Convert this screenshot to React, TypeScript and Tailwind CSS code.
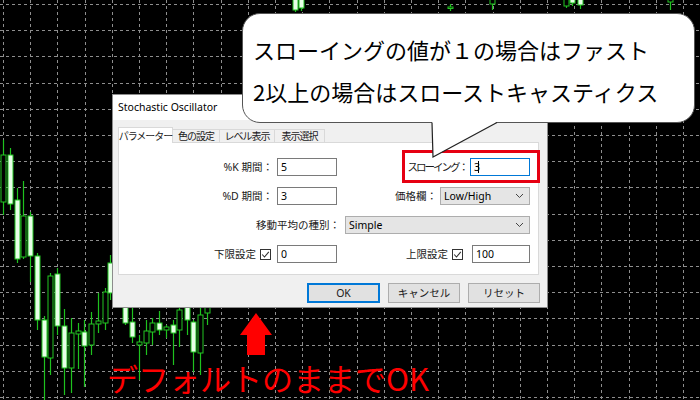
import React from "react";

type C = [number, number, number, number, number, boolean];

const candles: C[] = [
  [3, 140, 155, 202, 215, false],
  [10, 148, 155, 204, 210, true],
  [17, 188, 200, 259, 263, true],
  [23, 181, 216, 257, 259, false],
  [30, 212, 216, 256, 282, true],
  [37, 253, 256, 320, 330, true],
  [44, 316, 320, 357, 400, true],
  [50, 273, 276, 358, 375, false],
  [57, 268, 274, 326, 335, true],
  [64, 309, 326, 368, 395, true],
  [71, 318, 333, 368, 393, false],
  [78, 323, 331, 334, 369, false],
  [84, 320, 332, 346, 387, true],
  [91, 312, 324, 345, 355, false],
  [98, 293, 321, 324, 333, false],
  [105, 288, 292, 323, 330, false],
  [110, 255, 263, 293, 300, true],
  [125, 290, 295, 323, 325, true],
  [132, 300, 322, 337, 343, true],
  [139, 335, 342, 345, 380, false],
  [146, 320, 331, 343, 355, false],
  [152, 318, 323, 332, 345, false],
  [159, 311, 323, 330, 335, true],
  [166, 325, 327, 330, 338, false],
  [173, 320, 325, 333, 365, true],
  [179, 300, 310, 330, 347, false],
  [187, 290, 300, 320, 335, true],
  [193, 320, 322, 352, 372, true],
  [200, 300, 315, 353, 375, false],
  [207, 290, 300, 313, 325, false],
  [295, -5, -2, 10, 12, true],
  [301, -5, -2, 8, 11, true],
  [450, 4, 7, 8, 11, false],
  [492, -5, -2, 4, 10, false],
  [566, -5, -2, 6, 8, false],
  [572, -5, -2, 3, 6, true],
  [580, -5, -2, 5, 9, true],
  [670, -5, -2, 2, 10, false],
];

const VX = Array.from({ length: 26 }, (_, i) => 3.5 + Math.round(i * 27.2));
const HY = Array.from({ length: 16 }, (_, i) => 4.5 + Math.round(i * 26.2));

function Chart() {
  return (
    <svg className="absolute inset-0" width={700} height={400} viewBox="0 0 700 400">
      <rect width={700} height={400} fill="#000" />
      {VX.map((x) => (
        <line key={"v" + x} x1={x} y1={0} x2={x} y2={400} stroke="#8e8e8e" strokeWidth={1} strokeDasharray="3 3" />
      ))}
      {HY.map((y) => (
        <line key={"h" + y} x1={0} y1={y} x2={700} y2={y} stroke="#8e8e8e" strokeWidth={1} strokeDasharray="3 3" />
      ))}
      {candles.map(([x, hi, top, bot, lo, filled], i) => (
        <g key={i}>
          <line x1={x + 0.5} y1={hi} x2={x + 0.5} y2={lo} stroke="#1ec21e" strokeWidth={1.2} />
          <rect
            x={x - 2}
            y={top}
            width={5}
            height={Math.max(bot - top, 1.5)}
            fill={filled ? "#e8ffe8" : "#000"}
            stroke="#22c522"
            strokeWidth={1}
          />
        </g>
      ))}
    </svg>
  );
}

function Chevron() {
  return (
    <svg width={9} height={6} viewBox="0 0 9 6" className="shrink-0">
      <polyline points="1,1 4.5,4.5 8,1" fill="none" stroke="#444" strokeWidth={1} />
    </svg>
  );
}

function Input({ value, w, focus }: { value: string; w: string; focus?: boolean }) {
  return (
    <div
      className={
        focus
          ? "h-[18px] bg-white border border-[#0078d7] flex items-center pl-[3px] text-[10.5px] text-black " + w
          : "h-[18px] bg-white border border-[#7a7a7a] flex items-center pl-[3px] text-[10.5px] text-black " + w
      }
    >
      {value}
      {focus && <span className="w-px h-[12px] bg-black -ml-[2px]" />}
    </div>
  );
}

function Select({ value, w }: { value: string; w: string }) {
  return (
    <div
      className={
        "h-[18px] bg-[#e5e5e5] border border-[#adadad] flex items-center justify-between pl-[3px] pr-[5px] text-[10.5px] text-black " +
        w
      }
    >
      <span>{value}</span>
      <Chevron />
    </div>
  );
}

function Check() {
  return (
    <svg width={11} height={11} viewBox="0 0 11 11" className="shrink-0">
      <rect x={0.5} y={0.5} width={10} height={10} fill="#fff" stroke="#333" />
      <polyline points="2.2,5.5 4.5,8 8.8,2.8" fill="none" stroke="#333" strokeWidth={1.1} />
    </svg>
  );
}

export default function App() {
  return (
    <div className="relative w-[700px] h-[400px] bg-black overflow-hidden">
      <Chart />

      {/* Dialog */}
      <div className="absolute left-[112px] top-[94px] w-[436px] h-[214px] bg-[#f0f0f0] border border-[#8c8c8c] flex flex-col font-['Noto_Sans','Noto_Sans_CJK_JP',sans-serif] text-[#1a1a1a]">
        <div className="h-[25px] bg-white flex items-center pl-[5px] text-[10.5px] text-black">Stochastic Oscillator</div>
        <div className="pl-[5px] pt-[7px] flex flex-col">
          <div className="flex items-end h-[16px] text-[10px] leading-none whitespace-nowrap tracking-[-1px]">
            <div className="relative z-10 h-[16px] w-[55px] bg-white border border-b-0 border-[#d9d9d9] flex items-center justify-center">
              パラメーター
            </div>
            <div className="h-[14px] w-[47px] border border-l-0 border-[#d9d9d9] flex items-center justify-center">色の設定</div>
            <div className="h-[14px] w-[55px] border border-l-0 border-[#d9d9d9] flex items-center justify-center">レベル表示</div>
            <div className="h-[14px] w-[50px] border border-l-0 border-[#d9d9d9] flex items-center justify-center">表示選択</div>
          </div>
          <div className="relative -mt-px w-[421px] h-[133px] bg-white border border-[#d9d9d9] pt-[15px] flex flex-col gap-[11px] text-[10.5px] leading-none whitespace-nowrap">
            <div className="flex items-center">
              <div className="w-[154px] text-right">%K 期間：</div>
              <div className="ml-[4px]">
                <Input value="5" w="w-[60px]" />
              </div>
              <div className="w-[130px] text-right tracking-[-2px]">スローイング：</div>
              <div className="ml-[3px]">
                <Input value="3" w="w-[60px]" focus />
              </div>
            </div>
            <div className="flex items-center">
              <div className="w-[154px] text-right">%D 期間：</div>
              <div className="ml-[4px]">
                <Input value="3" w="w-[60px]" />
              </div>
              <div className="w-[100px] text-right">価格欄：</div>
              <div className="ml-[3px]">
                <Select value="Low/High" w="w-[90px]" />
              </div>
            </div>
            <div className="flex items-center">
              <div className="w-[221px] text-right">移動平均の種別：</div>
              <div className="ml-[5px]">
                <Select value="Simple" w="w-[185px]" />
              </div>
            </div>
            <div className="flex items-center">
              <div className="w-[154px] flex items-center justify-end gap-[4px] pr-[2px]">
                <span>下限設定</span>
                <Check />
              </div>
              <div className="ml-[4px]">
                <Input value="0" w="w-[60px]" />
              </div>
              <div className="w-[127px] flex items-center justify-end gap-[4px] pr-[1px]">
                <span>上限設定</span>
                <Check />
              </div>
              <div className="ml-[8px]">
                <Input value="100" w="w-[58px]" />
              </div>
            </div>
            <div className="absolute left-[283px] top-[7px] w-[138px] h-[33px] border-[3px] border-[#e60012]" />
          </div>
          <div className="flex justify-end gap-[8px] mt-[8px] w-[422px] text-[10.5px] leading-none">
            <div className="w-[73px] h-[20px] bg-[#e1e1e1] border-2 border-[#0078d7] flex items-center justify-center">OK</div>
            <div className="w-[72px] h-[20px] bg-[#e1e1e1] border border-[#adadad] flex items-center justify-center">キャンセル</div>
            <div className="w-[72px] h-[20px] bg-[#e1e1e1] border border-[#adadad] flex items-center justify-center">リセット</div>
          </div>
        </div>
      </div>

      {/* Speech bubble */}
      <div className="absolute left-[242px] top-[13px] w-[453px] h-[110px] bg-white rounded-[18px] border border-[#555] pt-[14px] pl-[10px] font-['Noto_Sans_CJK_JP',sans-serif] text-[22px] leading-[42px] text-black whitespace-nowrap">
        <div>スローイングの値が１の場合はファスト</div>
        <div>2以上の場合はスローストキャスティクス</div>
      </div>
      <svg className="absolute left-[420px] top-[110px]" width={90} height={50} viewBox="0 0 90 50">
        <polygon points="12,6 12,12 13,47 77,12 84,6" fill="#fff" />
        <polyline points="12,12.5 13,47 77,12.5" fill="none" stroke="#222" strokeWidth={1.2} />
      </svg>

      {/* Red arrow */}
      <svg className="absolute left-[238px] top-[311px]" width={36} height={46} viewBox="0 0 36 46">
        <polygon points="18,2 34,24 27,24 27,44 9,44 9,24 2,24" fill="#ff0000" />
      </svg>

      {/* Red caption */}
      <div className="absolute left-[107px] top-[361px] font-['Noto_Sans_CJK_JP',sans-serif] text-[31px] leading-[33px] text-[#ff0000] whitespace-nowrap">
        デフォルトのままでOK
      </div>
    </div>
  );
}
